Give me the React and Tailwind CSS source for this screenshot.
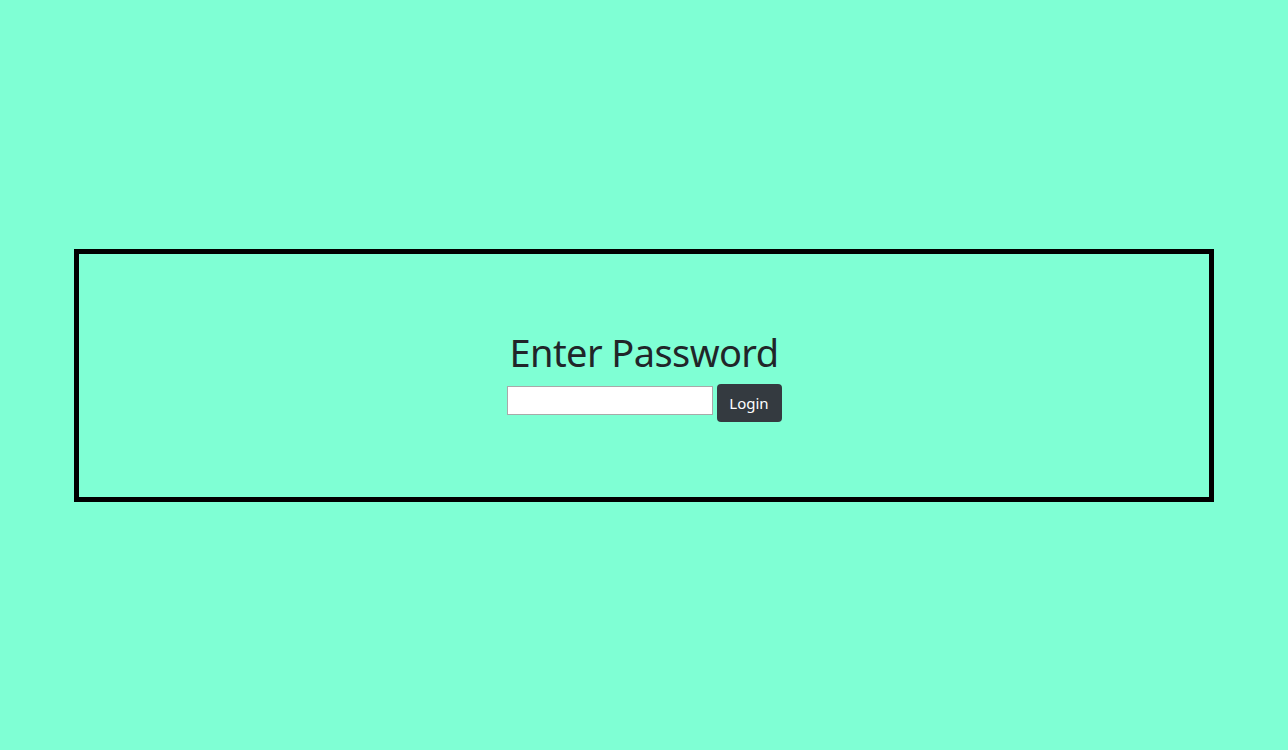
export default function App() {
  return (
    <div
      className="min-h-[750px] w-full bg-[#7fffd4] flex items-center justify-center"
      style={{ fontFamily: '"Noto Sans", "Open Sans", sans-serif' }}
    >
      <div className="w-[1140px] h-[253px] border-[5px] border-black flex flex-col items-center justify-center">
        <h1 className="text-[38px] leading-[48px] tracking-[-0.6px] text-[#212529] mb-2 pt-[1px] -mt-[1px]">Enter Password</h1>
        <div className="flex items-start gap-1 h-[38px]">
          <input
            type="password"
            className="mt-[2px] w-[206px] h-[29px] bg-white border border-[#a9a9a9] px-1"
          />
          <button
            type="button"
            className="h-[38px] w-[65px] rounded bg-[#343a40] text-white text-[15px] leading-6"
          >
            Login
          </button>
        </div>
      </div>
    </div>
  )
}
